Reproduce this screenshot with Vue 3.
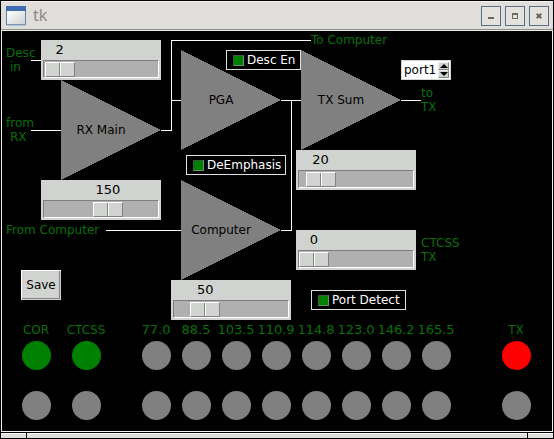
<script setup>
import { reactive, ref } from 'vue'

const MAX = 255

const sliders = reactive([
  { id: 'desc-in', name: 'Desc in level', value: 2 },
  { id: 'rx-main', name: 'RX Main gain', value: 150 },
  { id: 'tx-sum', name: 'TX Sum gain', value: 20 },
  { id: 'ctcss-tx', name: 'CTCSS TX level', value: 0 },
  { id: 'computer', name: 'Computer gain', value: 50 },
])

const switches = reactive([
  { id: 'desc-en', label: 'Desc En', on: true },
  { id: 'deemphasis', label: 'DeEmphasis', on: true },
  { id: 'port-detect', label: 'Port Detect', on: true },
])

const amps = [
  { label: 'RX Main', x: 60, y: 50 },
  { label: 'PGA', x: 180, y: 20 },
  { label: 'TX Sum', x: 300, y: 20 },
  { label: 'Computer', x: 180, y: 150 },
]

const notes = [
  { text: 'Desc', x: 5, y: 27 },
  { text: 'in', x: 9, y: 41 },
  { text: 'from', x: 5, y: 97 },
  { text: 'RX', x: 9, y: 111 },
  { text: 'From Computer', x: 5, y: 204 },
  { text: 'To Computer', x: 310, y: 14 },
  { text: 'to', x: 420, y: 67 },
  { text: 'TX', x: 420, y: 81 },
  { text: 'CTCSS', x: 420, y: 217 },
  { text: 'TX', x: 420, y: 231 },
]

const ledGroups = [
  { id: 'rx', leds: [{ label: 'COR', top: 'green' }, { label: 'CTCSS', top: 'green' }] },
  {
    id: 'tones',
    leds: ['77.0', '88.5', '103.5', '110.9', '114.8', '123.0', '146.2', '165.5'].map((label) => ({
      label,
      top: 'off',
    })),
  },
  { id: 'tx', leds: [{ label: 'TX', top: 'red' }] },
]

const port = ref(1)
function step(by) {
  port.value = Math.max(1, port.value + by)
}

function valueOffset(value) {
  return { marginLeft: `calc((100% - 30px) * ${value / MAX})` }
}
</script>

<template>
  <div class="window">
    <header class="titlebar">
      <svg class="app-icon" width="20" height="20" viewBox="0 0 20 20" aria-hidden="true">
        <defs>
          <linearGradient id="pane" x1="0" y1="0" x2="1" y2="1">
            <stop offset="0" stop-color="#ffffff" />
            <stop offset="1" stop-color="#cfd3d3" />
          </linearGradient>
        </defs>
        <rect width="20" height="20" fill="#5f7fae" />
        <rect x="0" y="0" width="20" height="5" fill="#3f6cb0" />
        <rect x="1" y="5" width="18" height="13" fill="url(#pane)" />
        <rect x="0" y="18" width="20" height="1" fill="#7d93b5" />
        <rect x="0" y="19" width="20" height="1" fill="#b9c0c8" />
      </svg>
      <h1 class="title">tk</h1>
      <button class="win-btn" type="button" aria-label="Minimize">
        <svg width="18" height="18" viewBox="0 0 18 18"><rect x="6" y="10" width="6" height="2" fill="#6b6b5e" /></svg>
      </button>
      <button class="win-btn" type="button" aria-label="Maximize">
        <svg width="18" height="18" viewBox="0 0 18 18">
          <path d="M6 6h6v6H6zM7 8v3h4V8z" fill="#6b6b5e" fill-rule="evenodd" />
        </svg>
      </button>
      <button class="win-btn" type="button" aria-label="Close">
        <svg width="18" height="18" viewBox="0 0 18 18">
          <path d="M6.700 6.700l4.600 4.600M11.300 6.700l-4.600 4.600" stroke="#6b6b5e" stroke-width="2" />
        </svg>
      </button>
    </header>

    <main class="body">
      <section class="canvas">
        <svg class="wiring" width="552" height="290" viewBox="0 0 552 290">
          <path
            class="wire"
            d="M30 30.500H40M30 100.500H60M160 100.500H170.500V10.500H310M170 70.500H180M280 70.500H300M290.500 70V200.500H280M105 200.500H180M400 70.500H420"
          />
          <g v-for="a in amps" :key="a.label">
            <path class="amp" :d="`M${a.x} ${a.y}V${a.y + 100}L${a.x + 100} ${a.y + 50}Z`" />
            <text class="amp-name" :x="a.x + 40" :y="a.y + 54">{{ a.label }}</text>
          </g>
          <text v-for="n in notes" :key="n.text + n.y" class="note" :x="n.x" :y="n.y">{{ n.text }}</text>
        </svg>

        <div v-for="s in sliders" :key="s.id" class="slider" :class="s.id">
          <div class="readout">
            <output class="value" :for="s.id" :style="valueOffset(s.value)">{{ s.value }}</output>
          </div>
          <input
            :id="s.id"
            v-model.number="s.value"
            class="range"
            type="range"
            min="0"
            :max="MAX"
            :aria-label="s.name"
          />
        </div>

        <label v-for="c in switches" :key="c.id" class="switch" :class="c.id">
          <input v-model="c.on" class="tick" type="checkbox" />
          <span>{{ c.label }}</span>
        </label>

        <div class="spinbox">
          <input class="port" type="text" :value="'port' + port" aria-label="Port" readonly />
          <div class="arrows">
            <button class="arrow" type="button" aria-label="Next port" @click="step(1)">
              <svg width="8" height="4" viewBox="0 0 8 4"><path d="M0 4L4 0L8 4Z" /></svg>
            </button>
            <button class="arrow" type="button" aria-label="Previous port" @click="step(-1)">
              <svg width="8" height="4" viewBox="0 0 8 4"><path d="M0 0L4 4L8 0Z" /></svg>
            </button>
          </div>
        </div>

        <button class="save" type="button">Save</button>
      </section>

      <section class="panel">
        <div v-for="g in ledGroups" :key="g.id" class="group" :class="g.id">
          <div v-for="l in g.leds" :key="l.label" class="cell">
            <span class="led-name">{{ l.label }}</span>
            <i class="led" :class="l.top"></i>
            <i class="led off"></i>
          </div>
        </div>
      </section>
    </main>

    <footer class="grip">
      <span class="grip-end"></span>
      <span class="grip-mid"></span>
      <span class="grip-end"></span>
    </footer>
  </div>
</template>

<style>
body {
  background: #000;
}
</style>

<style scoped>
.window {
  box-sizing: border-box;
  min-height: 100vh;
  display: flex;
  flex-direction: column;
  padding: 1px;
  background: #000;
  font-family: 'DejaVu Sans', sans-serif;
  font-size: 13px;
}

.titlebar {
  box-sizing: border-box;
  height: 29px;
  display: flex;
  align-items: center;
  gap: 4px;
  padding: 0 4px 0 5px;
  background: #e0deda;
  border-top: 1px solid #f4f3f0;
  border-bottom: 1px solid #8f8f8a;
}

.title {
  flex: 1;
  margin: 0 0 0 3px;
  font-family: 'Noto Sans', sans-serif;
  font-size: 16px;
  font-weight: 400;
  line-height: 20px;
  padding-bottom: 2px;
  color: #8d8b87;
}

.win-btn {
  box-sizing: border-box;
  width: 20px;
  height: 20px;
  padding: 0;
  display: grid;
  place-items: center;
  background: #e4e2de;
  border: 1px solid #5c6f8a;
}

.body {
  flex: 1;
  box-shadow: inset 0 0 0 1px #f0f0ec;
}

.canvas {
  position: relative;
  height: 290px;
}

.wiring {
  display: block;
}

.wire {
  fill: none;
  stroke: #fff;
  stroke-width: 1;
  shape-rendering: crispEdges;
}

.amp {
  fill: #808080;
  shape-rendering: crispEdges;
}

.amp-name {
  font-size: 12px;
  text-anchor: middle;
  fill: #000;
}

.note {
  font-size: 12px;
  fill: #087008;
}

.slider {
  position: absolute;
  box-sizing: border-box;
  width: 120px;
  height: 40px;
  padding: 0 2px 2px;
  background: #d0d3cf;
}

.slider.desc-in { left: 40px; top: 10px; }
.slider.rx-main { left: 40px; top: 150px; }
.slider.tx-sum { left: 295px; top: 120px; }
.slider.ctcss-tx { left: 295px; top: 200px; }
.slider.computer { left: 170px; top: 250px; }

.readout {
  padding: 0 2px 0 1px;
  height: 20px;
}

.value {
  display: block;
  width: 30px;
  line-height: 20px;
  text-align: center;
  color: #000;
}

.range {
  appearance: none;
  box-sizing: border-box;
  display: block;
  width: 100%;
  height: 18px;
  margin: 0;
  padding: 0 1px 0 0;
  background: #b0b0b0;
  border: 1px solid;
  border-color: #7e7e7e #fff #fff #7e7e7e;
}

.range::-webkit-slider-thumb {
  appearance: none;
  box-sizing: border-box;
  width: 30px;
  height: 15px;
  background: linear-gradient(90deg, transparent 13px, #828282 13px 14px, #fff 14px 15px, transparent 15px) #d0d3cf;
  border: 1px solid;
  border-color: #fff #828282 #828282 #fff;
}

.switch {
  position: absolute;
  box-sizing: border-box;
  height: 20px;
  display: flex;
  align-items: center;
  gap: 3px;
  padding-left: 6px;
  border: 1px solid #e0e0e0;
  background: #000;
  color: #fff;
  font-size: 12px;
  white-space: nowrap;
}

.switch.desc-en { left: 225px; top: 20px; width: 75px; }
.switch.deemphasis { left: 185px; top: 125px; width: 100px; }
.switch.port-detect { left: 310px; top: 260px; width: 95px; }

.tick {
  appearance: none;
  box-sizing: border-box;
  width: 11px;
  height: 11px;
  margin: 0;
  border: 1px solid;
  border-color: #3d5c3d #6f906f #6f906f #3d5c3d;
  background: #000;
}

.tick:checked {
  background: #008000;
}

.spinbox {
  position: absolute;
  left: 400px;
  top: 30px;
  box-sizing: border-box;
  width: 50px;
  height: 20px;
  display: flex;
  background: #fff;
  border: 1px solid #d0d3cf;
}

.port {
  flex: 1;
  min-width: 0;
  padding: 0 0 0 2px;
  border: 0;
  background: #fff;
  color: #000;
  font: inherit;
  font-size: 12px;
}

.arrows {
  display: grid;
  grid-template-rows: 1fr 1fr;
  padding: 1px;
}

.arrow {
  box-sizing: border-box;
  width: 11px;
  padding: 0;
  display: grid;
  place-items: center;
  background: #d0d3cf;
  border: 1px solid;
  border-color: #eee #828282 #828282 #eee;
}

.save {
  position: absolute;
  left: 20px;
  top: 240px;
  box-sizing: border-box;
  width: 40px;
  height: 30px;
  padding: 0;
  background: #d0d3cf;
  border: 1px solid;
  border-color: #fff #d0d3cf #d0d3cf #fff;
  box-shadow: inset -1px -1px 0 #828282;
  color: #000;
  font: inherit;
  font-size: 12px;
}

.panel {
  display: flex;
  padding: 0 12px 12px 10px;
}

.group {
  display: flex;
}

.group.rx {
  margin-right: 25px;
}

.group.tx {
  margin-left: auto;
}

.cell {
  width: 50px;
  display: grid;
  grid-template-rows: 21px 29px 29px;
  justify-items: center;
  padding-bottom: 21px;
}

.tones .cell {
  width: 40px;
}

.led-name {
  font-size: 12px;
  line-height: 20px;
  color: #087008;
}

.tones .led-name {
  font-size: 13px;
}

.led {
  width: 29px;
  height: 29px;
  border-radius: 50%;
}

.led + .led {
  margin-top: 21px;
}

.led.off { background: #808080; }
.led.green { background: #008000; }
.led.red { background: #f00; }

.grip {
  display: flex;
  gap: 1px;
  height: 5px;
  margin-top: 1px;
}

.grip-end,
.grip-mid {
  background: #e0deda;
  box-shadow: inset 0 1px 0 #fff;
}

.grip-end {
  width: 25px;
}

.grip-mid {
  flex: 1;
}
</style>
